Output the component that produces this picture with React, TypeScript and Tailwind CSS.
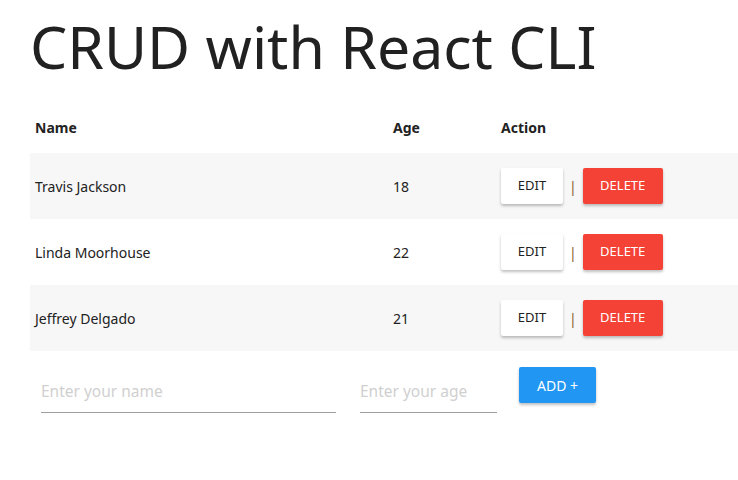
const people = [
  { name: "Travis Jackson", age: 18 },
  { name: "Linda Moorhouse", age: 22 },
  { name: "Jeffrey Delgado", age: 21 },
];

export default function App() {
  return (
    <div className="min-h-screen bg-white pl-[30px] text-[#222] font-['Noto_Sans',sans-serif] overflow-hidden">
      <h1 className="pt-[6px] text-[59px] leading-[81px] font-normal text-[#212121]">
        CRUD with React CLI
      </h1>
      <table className="mt-[18px] w-[740px] border-collapse text-[14px]">
        <thead>
          <tr className="h-[48px] text-left">
            <th className="w-[358px] px-[5px] pb-[3px] font-bold">Name</th>
            <th className="w-[108px] px-[5px] pb-[3px] font-bold">Age</th>
            <th className="px-[5px] pb-[3px] font-bold">Action</th>
          </tr>
        </thead>
        <tbody>
          {people.map((p) => (
            <tr key={p.name} className="h-[66px] odd:bg-[#f7f7f7]">
              <td className="px-[5px]">{p.name}</td>
              <td className="px-[5px]">{p.age}</td>
              <td className="px-[5px]">
                <div className="flex items-center">
                  <button className="h-[36px] w-[62px] rounded-[2px] bg-white text-[13px] text-[#222] shadow-[0_2px_3px_rgba(0,0,0,0.25)]">
                    EDIT
                  </button>
                  <span className="mx-[6px] text-[#8b5a2b]">|</span>
                  <button className="h-[36px] w-[80px] rounded-[2px] bg-[#f44336] text-[13px] text-white shadow-[0_2px_3px_rgba(0,0,0,0.25)]">
                    DELETE
                  </button>
                </div>
              </td>
            </tr>
          ))}
        </tbody>
      </table>
      <div className="flex items-start pt-[16px]">
        <input
          placeholder="Enter your name"
          className="ml-[11px] mt-[3px] h-[43px] w-[295px] border-b border-[#9e9e9e] text-[15.5px] outline-none placeholder:text-[#d0d0d0]"
        />
        <input
          placeholder="Enter your age"
          className="ml-[24px] mt-[3px] h-[43px] w-[137px] border-b border-[#9e9e9e] text-[15.5px] outline-none placeholder:text-[#d0d0d0]"
        />
        <button className="ml-[22px] h-[36px] w-[77px] rounded-[2px] bg-[#2196f3] text-[14px] text-white shadow-[0_2px_3px_rgba(0,0,0,0.25)]">
          ADD +
        </button>
      </div>
    </div>
  );
}
